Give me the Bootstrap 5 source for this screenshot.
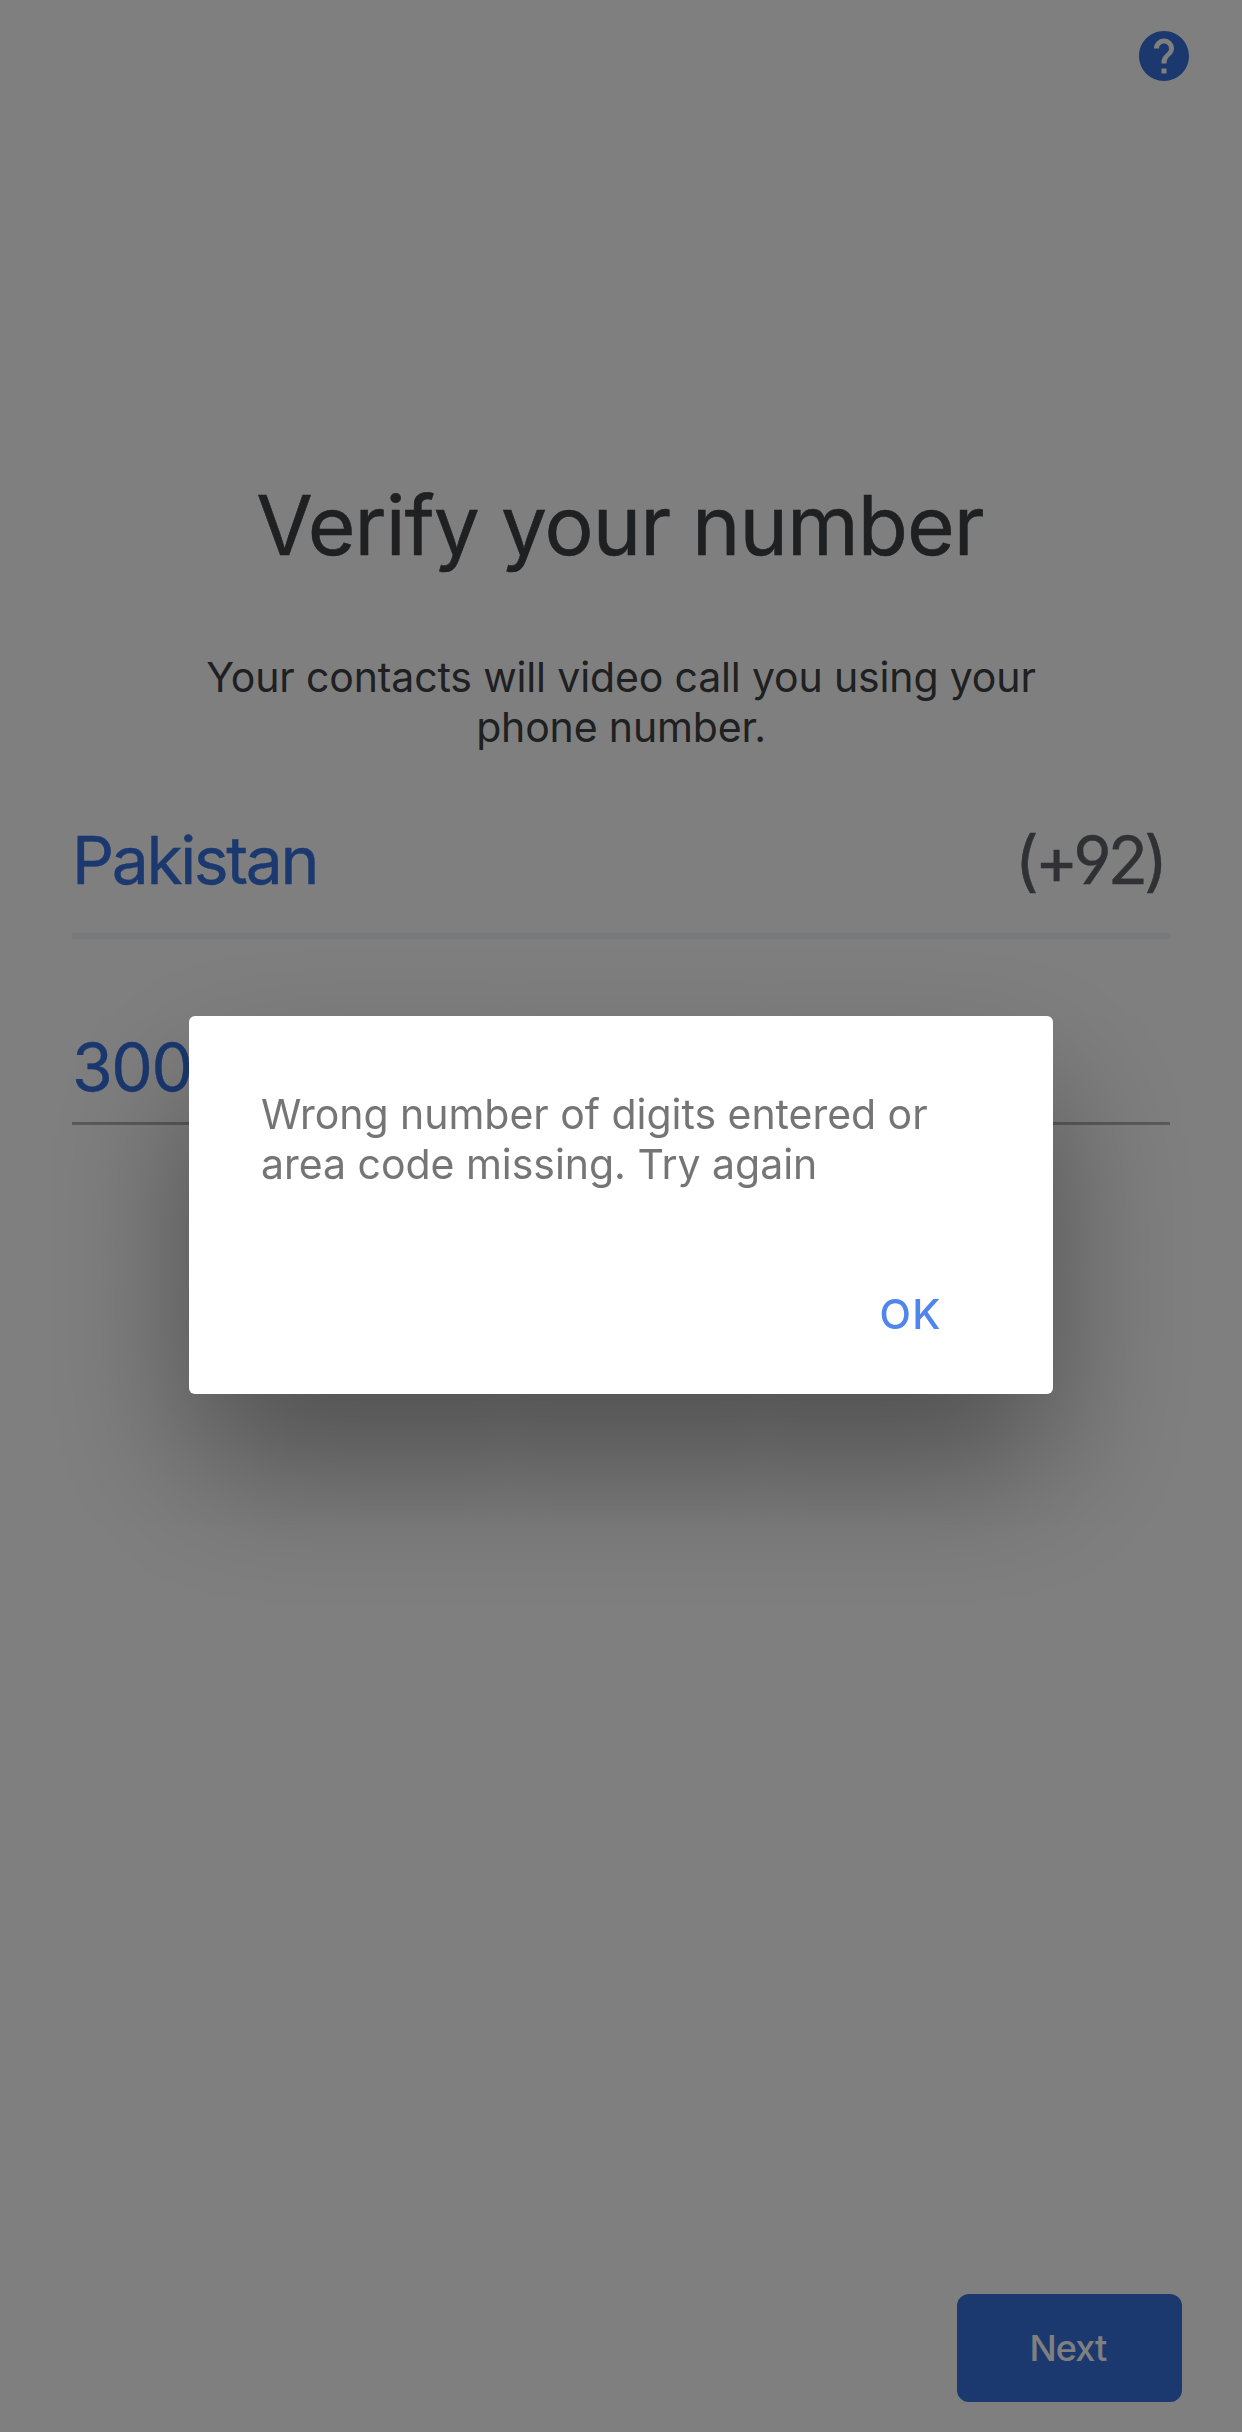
<!DOCTYPE html>
<html lang="en">
<head>
    <meta charset="UTF-8">
    <meta name="viewport" content="width=device-width, initial-scale=1">
    <title>Verify your number</title>
    <link href="https://cdn.jsdelivr.net/npm/bootstrap@5.3.0/dist/css/bootstrap.min.css" rel="stylesheet">
    <style>
        body { font-family: Inter, Roboto, sans-serif; color: #3c4043; background: #fff; }
        .screen { height: 2432px; padding: 26px 60px 30px 72px; overflow: hidden; }
        .help-btn { width: 60px; height: 60px; margin-right: -12px; color: #3670de; }
        .page-title { margin-top: 390px; font-size: 82px; line-height: 100px; font-weight: 400; letter-spacing: -1px; padding-right: 14px; -webkit-text-stroke: .5px currentColor; }
        .page-text { margin: 76px 12px 0 0; font-size: 41px; line-height: 50px; letter-spacing: -.15px; }
        .country-row, .phone-row { margin-right: 12px; font-size: 66px; line-height: 80px; color: #3670de; letter-spacing: -2.4px; -webkit-text-stroke: .4px currentColor; }
        .country-row { margin-top: 68px; height: 119px; border-bottom: 6px solid #f1f3f4; }
        .dial-code { padding-right: 6px; color: #5f6368; letter-spacing: -4px; font-feature-settings: "ss01"; }
        .phone-row { margin-top: 88px; height: 98px; border-bottom: 3px solid #b4b4b4; letter-spacing: -1.5px; }
        .next-btn { width: 225px; height: 108px; padding: 0 3px 0 0; font-size: 36px; font-weight: 500; letter-spacing: -.9px; border-radius: 12px; background: #3670de; color: #fff; }
        .alert-dialog { width: 864px; max-width: none; margin: 1016px 0 0 189px; }
        .alert-box { height: 378px; border-radius: 6px; box-shadow: 0 72px 144px rgba(0, 0, 0, .38); }
        .alert-message { padding: 73px 72px 0; font-size: 41px; line-height: 50px; letter-spacing: -.03px; color: #757575; }
        .ok-btn { margin-right: 111px; margin-bottom: 55px; font-size: 41px; line-height: 50px; font-weight: 500; letter-spacing: 1.5px; color: #5085ee; }
    </style>
</head>
<body>
    <main class="screen d-flex flex-column">
        <button class="help-btn btn p-0 border-0 align-self-end" aria-label="Help">
            <svg class="d-block" width="60" height="60" viewBox="0 0 24 24" fill="currentColor">
                <path d="M12 2C6.48 2 2 6.48 2 12s4.48 10 10 10 10-4.48 10-10S17.52 2 12 2zm1 17h-2v-2h2v2zm2.07-7.75l-.9.92C13.45 12.9 13 13.5 13 15h-2v-.5c0-1.1.45-2.1 1.17-2.83l1.24-1.26c.37-.36.59-.86.59-1.41 0-1.1-.9-2-2-2s-2 .9-2 2H8c0-2.21 1.79-4 4-4s4 1.79 4 4c0 .88-.36 1.68-.93 2.25z"/>
            </svg>
        </button>

        <h1 class="page-title text-center mb-0">Verify your number</h1>
        <p class="page-text text-center">Your contacts will video call you using your<br>phone number.</p>

        <div class="country-row d-flex justify-content-between">
            <span>Pakistan</span>
            <span class="dial-code">(+92)</span>
        </div>
        <div class="phone-row">300</div>

        <button class="next-btn btn border-0 mt-auto align-self-end">Next</button>
    </main>

    <div class="modal-backdrop show"></div>
    <div class="modal d-block overflow-hidden" tabindex="-1" role="dialog">
        <div class="modal-dialog alert-dialog">
            <div class="modal-content alert-box border-0">
                <div class="modal-body alert-message">Wrong number of digits entered or<br>area code missing. Try again</div>
                <button class="ok-btn btn p-0 border-0 align-self-end">OK</button>
            </div>
        </div>
    </div>

    <script src="https://cdn.jsdelivr.net/npm/bootstrap@5.3.0/dist/js/bootstrap.bundle.min.js"></script>
</body>
</html>
